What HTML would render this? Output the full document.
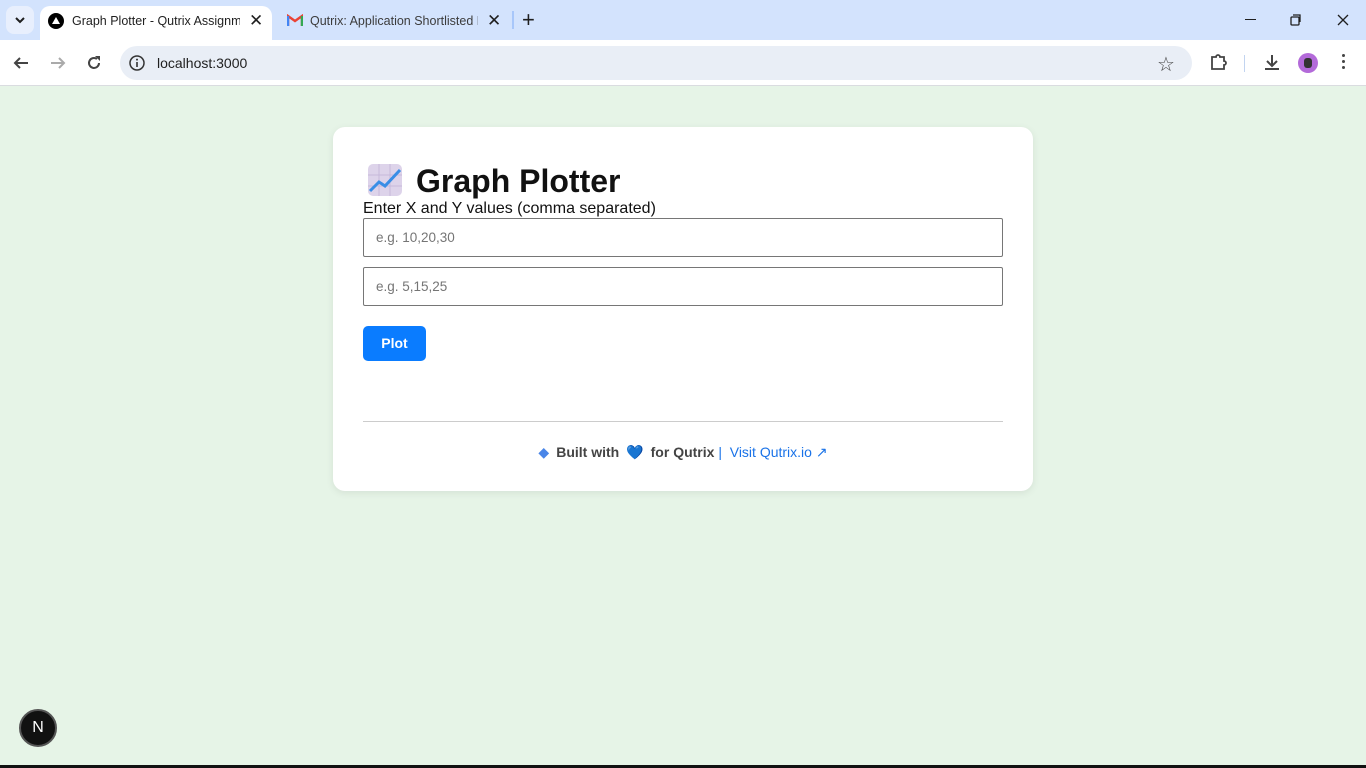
<!DOCTYPE html>
<html><head><meta charset="utf-8"><style>
*{box-sizing:border-box;margin:0;padding:0}
body{width:1366px;height:768px;overflow:hidden;font-family:"Liberation Sans",Arial,sans-serif;background:#e6f4e7;position:relative}
.top{position:absolute;left:0;top:0;width:1366px;height:40px;background:#d3e3fd}
.tabbtn{position:absolute;left:6px;top:6px;width:28px;height:28px;border-radius:8px;background:#e8effd}
.tab1{position:absolute;left:40px;top:6px;width:232px;height:34px;background:#fff;border-radius:10px 10px 0 0}
.tabt{position:absolute;font-size:12.5px;color:#1f1f1f;white-space:nowrap;overflow:hidden}
.bar{position:absolute;left:0;top:40px;width:1366px;height:46px;background:#fff;border-bottom:1px solid #dadce0}
.omni{position:absolute;left:120px;top:6px;width:1072px;height:34px;border-radius:17px;background:#e9eef6}
.card{position:absolute;left:333px;top:127px;width:700px;height:364px;background:#fff;border-radius:12px;box-shadow:0 2px 8px rgba(0,0,0,.08)}
h1{position:absolute;left:83px;top:36px;font-size:32px;font-weight:bold;color:#111}
.lbl{position:absolute;left:30px;top:73px;font-size:16px;color:#111}
.inp{position:absolute;left:30px;width:640px;height:39px;border:1px solid #767676;border-radius:2px;font-size:13.5px;color:#757575;padding:11px 12px}
.btn{position:absolute;left:30px;top:199px;width:63px;height:35px;background:#0a7cff;border-radius:5px;color:#fff;font-size:14px;font-weight:bold;text-align:center;line-height:35px}
.hr{position:absolute;left:30px;top:294px;width:640px;height:1px;background:#ccc}
.foot{position:absolute;left:0;width:700px;top:317px;text-align:center;font-size:14px;color:#444;white-space:nowrap}
.sp{display:inline-block;width:7px}
</style></head><body>
<div class="top">
 <div class="tabbtn"><svg width="28" height="28"><path d="M10 12l4 4 4-4" stroke="#1f1f1f" stroke-width="2" fill="none"/></svg></div>
 <div class="tab1">
  <svg style="position:absolute;left:8px;top:7px" width="16" height="16"><circle cx="8" cy="8" r="8" fill="#000"/><path d="M8 4l4 7H4z" fill="#fff"/></svg>
  <div class="tabt" style="left:32px;top:8px;width:168px">Graph Plotter - Qutrix Assignme</div>
  <div class="tabt" style="left:209px;top:5px;font-size:17px">✕</div>
 </div>
 <svg style="position:absolute;left:287px;top:14px" width="16" height="12"><path d="M1 12V2l7 5 7-5v10" stroke="#ea4335" stroke-width="2.4" fill="none"/><path d="M1 12V2" stroke="#4285f4" stroke-width="2.4"/><path d="M15 12V2" stroke="#34a853" stroke-width="2.4"/></svg>
 <div class="tabt" style="left:310px;top:14px;width:168px;color:#3c3c3c">Qutrix: Application Shortlisted F</div>
 <div class="tabt" style="left:487px;top:11px;font-size:17px">✕</div>
 <div style="position:absolute;left:512px;top:11px;width:2px;height:18px;background:#a8c7fa"></div>
 <div class="tabt" style="left:522px;top:7px;font-size:22px">+</div>
 <div style="position:absolute;left:1245px;top:19px;width:11px;height:1px;background:#1f1f1f"></div>
 <svg style="position:absolute;left:1290px;top:14px" width="12" height="12"><rect x="1" y="3" width="8" height="8" stroke="#1f1f1f" fill="none" stroke-width="1.3" rx="1"/><path d="M3 1h7v7" stroke="#1f1f1f" fill="none" stroke-width="1.3"/></svg>
 <svg style="position:absolute;left:1337px;top:14px" width="12" height="12"><path d="M1 1l10 10M11 1L1 11" stroke="#1f1f1f" stroke-width="1.3"/></svg>
</div>
<div class="bar">
 <svg style="position:absolute;left:12px;top:14px" width="18" height="18"><path d="M16 9H3M8 4L3 9l5 5" stroke="#444" stroke-width="2" fill="none"/></svg>
 <svg style="position:absolute;left:49px;top:14px" width="18" height="18"><path d="M2 9h13M10 4l5 5-5 5" stroke="#aaa" stroke-width="2" fill="none"/></svg>
 <svg style="position:absolute;left:85px;top:14px" width="18" height="18"><path d="M14 9a5 5 0 1 1-2-4" stroke="#444" stroke-width="2" fill="none"/><path d="M10 2h5v5z" fill="#444"/></svg>
 <div class="omni">
  <svg style="position:absolute;left:9px;top:9px" width="16" height="16"><circle cx="8" cy="8" r="7" stroke="#333" stroke-width="1.5" fill="none"/><path d="M8 7v5" stroke="#333" stroke-width="1.6"/><circle cx="8" cy="4.6" r="1" fill="#333"/></svg>
  <div style="position:absolute;left:37px;top:9px;font-size:14px;color:#1f1f1f">localhost:3000</div>
  <div style="position:absolute;left:1037px;top:6px;font-size:20px;color:#444">☆</div>
 </div>
 <svg style="position:absolute;left:1209px;top:13px" width="18" height="18"><path d="M3 4h4a2 2 0 0 1 4 0h4v4a2 2 0 0 1 0 4v4H3z" stroke="#444" stroke-width="1.8" fill="none"/></svg>
 <div style="position:absolute;left:1244px;top:15px;width:1px;height:17px;background:#c2d4f0"></div>
 <svg style="position:absolute;left:1263px;top:13px" width="18" height="18"><path d="M9 2v10M4 8l5 5 5-5M2 16h14" stroke="#444" stroke-width="2" fill="none"/></svg>
 <div style="position:absolute;left:1298px;top:13px;width:20px;height:20px;border-radius:50%;background:#b36ad9"><div style="margin:5px auto;width:8px;height:10px;background:#333;border-radius:3px"></div></div>
 <div style="position:absolute;left:1342px;top:14px;width:3px;line-height:6px;font-size:0">
  <div style="width:3px;height:3px;background:#444;border-radius:50%;margin-bottom:3px"></div><div style="width:3px;height:3px;background:#444;border-radius:50%;margin-bottom:3px"></div><div style="width:3px;height:3px;background:#444;border-radius:50%"></div></div>
</div>
<div class="card">
 <svg style="position:absolute;left:35px;top:37px" width="34" height="32"><rect x="0" y="0" width="34" height="32" rx="5" fill="#ddd3ea"/><path d="M11 0v32M22 0v32M0 11h34M0 22h34" stroke="#c6b8da" stroke-width="1"/><path d="M2 27l9-9 6 4L32 6" stroke="#3a8ee6" stroke-width="3" fill="none"/></svg>
 <h1>Graph Plotter</h1>
 <div class="lbl">Enter X and Y values (comma separated)</div>
 <div class="inp" style="top:91px">e.g. 10,20,30</div>
 <div class="inp" style="top:140px">e.g. 5,15,25</div>
 <div class="btn">Plot</div>
 <div class="hr"></div>
 <div class="foot"><span style="color:#4a86e8">◆</span><span class="sp"></span><b>Built with</b><span class="sp"></span><span style="color:#3b6fd8">💙</span><span class="sp"></span><b>for Qutrix</b> <span style="color:#1a73e8">|</span>&nbsp; <span style="color:#1a73e8">Visit Qutrix.io ↗</span></div>
</div>
<div style="position:absolute;left:19px;top:709px;width:38px;height:38px;border-radius:50%;background:#111;border:2px solid #555;color:#fff;font-size:16px;text-align:center;line-height:34px">N</div>
<div style="position:absolute;left:0;top:765px;width:1366px;height:3px;background:#111"></div>
</body></html>
